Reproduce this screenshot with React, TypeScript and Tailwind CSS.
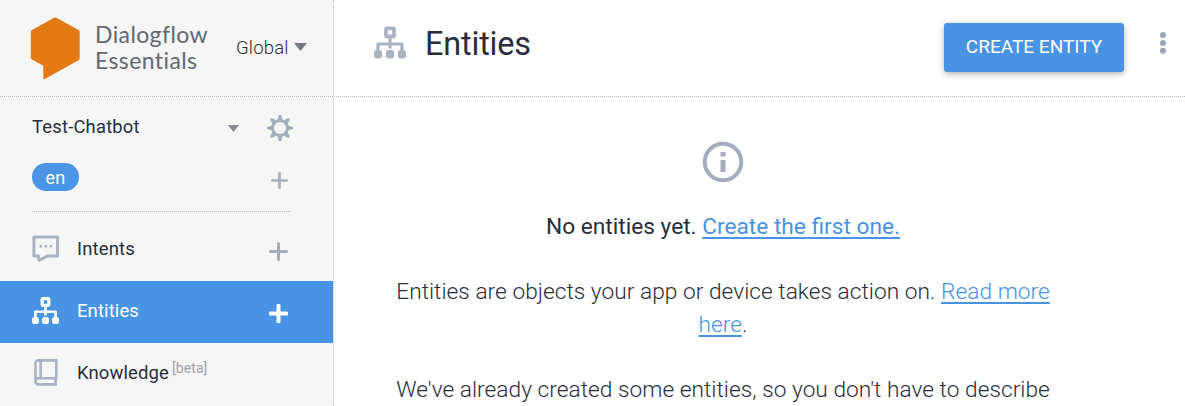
import type { ReactNode } from 'react';

function Hierarchy({ className }: { className: string }) {
  return (
    <svg viewBox="0 0 32 32" className={className} fill="none" stroke="currentColor">
      <rect x="12" y="1.9" width="8" height="8" rx="1" strokeWidth="3.8" />
      <path d="M16 11v11M4 25v-7.5h24V25" strokeWidth="3.2" strokeLinejoin="round" />
      <g fill="currentColor" stroke="none">
        <rect x="0" y="23.6" width="8.2" height="8.4" rx="3" />
        <rect x="11.9" y="23.6" width="8.2" height="8.4" rx="3" />
        <rect x="23.8" y="23.6" width="8.2" height="8.4" rx="3" />
      </g>
    </svg>
  );
}

function Gear() {
  return (
    <svg viewBox="0 0 26 26" className="h-[26px] w-[26px] text-[#a3adbd]" stroke="currentColor" fill="none">
      <circle cx="13" cy="13" r="7.3" strokeWidth="2.4" />
      <g fill="currentColor" stroke="none">
        {[0, 45, 90, 135, 180, 225, 270, 315].map((a) => (
          <path key={a} d="M9.9 6.2 12 0h2l2.1 6.2z" transform={`rotate(${a} 13 13)`} />
        ))}
      </g>
    </svg>
  );
}

function Plus({ className, width = 3 }: { className: string; width?: number }) {
  return (
    <svg viewBox="0 0 19 19" className={className} stroke="currentColor" strokeWidth={width} strokeLinecap="round">
      <path d="M9.5 1.5v16M1.5 9.5h16" />
    </svg>
  );
}

function Chat() {
  return (
    <svg viewBox="0 0 28 28" className="h-7 w-7 text-[#a9b3c2]" fill="none" stroke="currentColor" strokeWidth="3">
      <path d="M1.9 1.9h23.7v19H15.5L7 25.3l-.5-4.4H1.9z" strokeLinejoin="round" />
      <path d="M7.5 11.3h2.6M12.5 11.3h2.6M17.5 11.3h2.6" strokeWidth="2.6" />
    </svg>
  );
}

function Book() {
  return (
    <svg viewBox="0 0 24 27" className="ml-[2px] h-[27px] w-6 text-[#a9b3c2]" fill="none" stroke="currentColor" strokeWidth="2.6">
      <path d="M22.3 1.4H4.5a3 3 0 0 0-3 3v18a3 3 0 0 0 3 3h17.8M22.3 0v19.3H4.5a3 3 0 0 0-3 3M6.6 1.4v17.9M21.6 19.3v7.2" />
    </svg>
  );
}

function NavItem({ icon, children, className }: { icon: ReactNode; children: ReactNode; className: string }) {
  return (
    <div className={`flex shrink-0 items-center pl-8 ${className}`}>
      <div className="w-[45px]">{icon}</div>
      {children}
    </div>
  );
}

export default function App() {
  return (
    <div className="flex h-[406px] w-[1185px] overflow-hidden bg-white font-[Roboto,sans-serif] text-[#292d3b]">
      <aside className="flex w-[334px] shrink-0 flex-col border-r border-dotted border-[#b9c0ce] bg-[#f6f6f6]">
        <div className="flex h-[97px] shrink-0 border-b border-dotted border-[#b3bdd0] pl-[30px]">
          <svg viewBox="0 0 50 63" className="mt-[17px] h-[63px] w-[50px]">
            <path d="M24 .7q1.2-.6 2.4 0L48.5 13q1.2.7 1.2 2v26q0 1.5-1.2 2.2L14.8 62q-1.5.8-1.5-.8V48.8L2 42.4q-1.2-.7-1.2-2V15q0-1.3 1.2-2z" fill="#e37913" />
          </svg>
          <div className="ml-[15px] mt-[21px] w-[141px] font-[Lato,sans-serif] text-[23px] leading-[26px] tracking-[0.4px] text-[#626772]">
            <div>Dialogflow</div>
            <div>Essentials</div>
          </div>
          <div className="mt-[37px] flex h-6 items-center gap-[5px] text-[18.5px] font-light tracking-[0.2px]">
            Global
            <svg viewBox="0 0 13 8" className="mb-[4px] h-2 w-[13px]" fill="#737781"><path d="M0 0h13L6.5 8z" /></svg>
          </div>
        </div>
        <div className="flex h-[60px] shrink-0 items-center pl-8 pr-[40px]">
          <span className="w-[195px] text-[18.4px] tracking-[0.2px]">Test-Chatbot</span>
          <svg viewBox="0 0 13 8" className="mt-[2px] h-[7px] w-[13px]" fill="#898c93"><path d="M0 0h13L6.5 8z" /></svg>
          <div className="ml-auto mt-[1px]"><Gear /></div>
        </div>
        <div className="ml-8 mr-[42px] mt-[6px] flex h-[49px] shrink-0 items-start justify-between border-b border-dotted border-[#b3bdd0]">
          <span className="flex h-7 w-[47px] items-center justify-center rounded-full bg-[#4a95e5] pt-px text-[18px] leading-7 tracking-[0.2px] text-white">en</span>
          <Plus className="mr-[3px] mt-[9px] h-[17px] w-[17px] text-[#a3adbd]" />
        </div>
        <NavItem className="mt-[7px] h-[62px] text-[18.5px] tracking-[0.15px]" icon={<div className="-mt-[3px]"><Chat /></div>}>
          <span>Intents</span>
          <Plus className="ml-auto mr-[45px] mt-[3px] h-[19px] w-[19px] text-[#a3adbd]" />
        </NavItem>
        <NavItem className="h-[62px] bg-[#4893e4] pb-px text-[18.5px] tracking-[0.1px] text-white" icon={<div className="-mt-[3px]"><Hierarchy className="h-[27px] w-[27px]" /></div>}>
          <span>Entities</span>
          <Plus width={4} className="ml-auto mr-[45px] mt-[3px] h-[19px] w-[19px]" />
        </NavItem>
        <NavItem className="h-[62px] pb-px text-[18.5px] tracking-[0.1px]" icon={<div className="-mt-[3px]"><Book /></div>}>
          <span>Knowledge</span>
          <span className="mb-[11px] ml-[3px] text-[14px] text-[#9ba1ac]">[beta]</span>
        </NavItem>
      </aside>
      <main className="flex min-w-0 flex-1 flex-col">
        <header className="flex h-[97px] shrink-0 items-start border-b border-dotted border-[#b3bdd0] pl-[40px]">
          <Hierarchy className="mt-[26px] h-[33px] w-8 text-[#a9b3c2]" />
          <h1 className="ml-[19px] mt-[24px] text-[32.4px] leading-10 tracking-[-0.15px]">Entities</h1>
          <button className="ml-auto mt-[23px] h-[49px] w-[180px] rounded-[3px] bg-[#4893e4] text-[19px] tracking-[0.02px] text-white shadow-[0_2px_6px_rgba(0,0,0,0.3)]">CREATE ENTITY</button>
          <svg viewBox="0 0 6 22" className="ml-9 mr-[19px] mt-[32px] h-[22px] w-[6px]" fill="#9ba5b5">
            <circle cx="3" cy="3" r="3" /><circle cx="3" cy="11" r="3" /><circle cx="3" cy="18.8" r="3" />
          </svg>
        </header>
        <section className="flex flex-col items-center pr-[73px] text-[22.7px] leading-[33px]">
          <svg viewBox="0 0 42 42" className="mt-[44px] h-[42px] w-[42px] text-[#a3adbd]" fill="none" stroke="currentColor" strokeWidth="4">
            <circle cx="21" cy="21" r="18.3" />
            <path d="M21 11v4.5M21 19v12" strokeWidth="5" />
          </svg>
          <p className="mt-[27px] whitespace-nowrap">
            No entities yet. <a className="text-[#4893e4] underline decoration-2 underline-offset-[3px]">Create the first one.</a>
          </p>
          <p className="mt-8 whitespace-nowrap text-center font-light tracking-[0.03px]">
            Entities are objects your app or device takes action on. <a className="text-[#4893e4] underline decoration-2 underline-offset-[3px]">Read more<br />here</a>.
          </p>
          <p className="mt-8 whitespace-nowrap font-light tracking-[0.03px]">We've already created some entities, so you don't have to describe</p>
        </section>
      </main>
    </div>
  );
}
